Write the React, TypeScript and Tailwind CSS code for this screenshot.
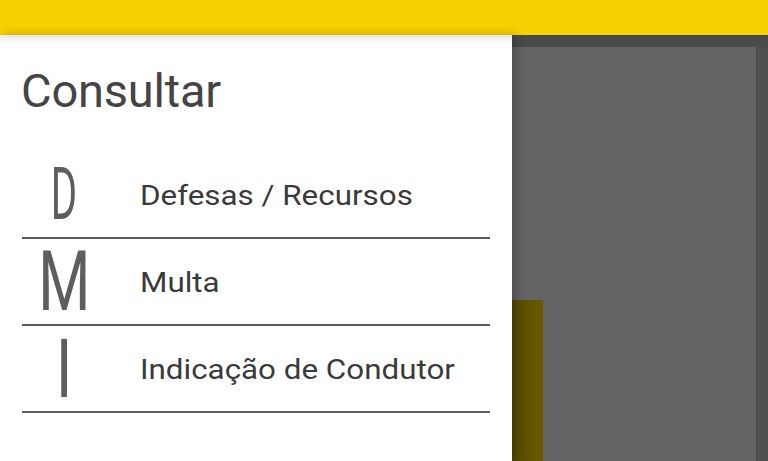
const items = [
  { letter: "D", size: "text-[73px]", scale: "scale-x-[0.55]", label: "Defesas / Recursos" },
  { letter: "M", size: "text-[83px]", scale: "scale-x-[0.72]", label: "Multa" },
  { letter: "I", size: "text-[82px]", scale: "scale-x-[0.75]", label: "Indicação de Condutor" },
];

export default function App() {
  return (
    <div className="h-[461px] w-[768px] overflow-hidden flex flex-col bg-[#4c4c4c] font-['Roboto',sans-serif]">
      <header className="h-[35px] shrink-0 bg-[#f8d100]" />
      <div className="flex flex-1 min-h-0">
        {/* drawer */}
        <aside className="relative z-10 w-[512px] shrink-0 bg-white shadow-[4px_0_10px_rgba(0,0,0,0.25)]">
          <div className="absolute inset-x-0 top-0 h-[8px] bg-gradient-to-b from-black/10 to-transparent" />
          <h1 className="pl-[21px] pt-[28px] text-[47px] leading-[56px] text-[#444] tracking-[-0.2px]">Consultar</h1>
          <ul className="mt-[33px] pl-[22px] pr-[22px]">
            {items.map((it) => (
              <li key={it.letter} className="flex h-[87px] items-center border-b-2 border-[#5c5c5c]">
                <div className="flex w-[84px] justify-center">
                  <span className={`inline-block leading-none text-[#5e5e5e] ${it.size} ${it.scale}`}>{it.letter}</span>
                </div>
                <span className="ml-[34px] inline-block origin-left scale-x-[1.12] text-[28px] text-[#3a3a3a] pt-[2px]">{it.label}</span>
              </li>
            ))}
          </ul>
        </aside>
        {/* dimmed content */}
        <main className="flex flex-1 flex-col">
          <div className="h-[12px] shrink-0 bg-[#4a4a4a]" />
          <div className="flex flex-1">
            <div className="flex flex-1 flex-col bg-[#646464]">
              <div className="flex-1" />
              <div className="h-[161px] w-[31px] bg-gradient-to-r from-[#554a00] to-[#6a5b00]" />
            </div>
            <div className="w-[12px] shrink-0 bg-[#505050] border-l border-[#474747]" />
          </div>
        </main>
      </div>
    </div>
  );
}
